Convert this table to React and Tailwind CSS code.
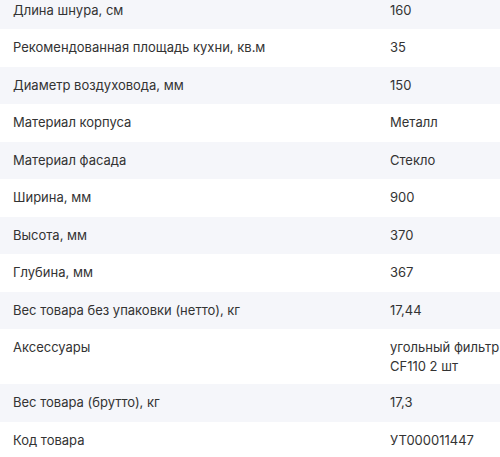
const rows = [
  ['Длина шнура, см', '160'],
  ['Рекомендованная площадь кухни, кв.м', '35'],
  ['Диаметр воздуховода, мм', '150'],
  ['Материал корпуса', 'Металл'],
  ['Материал фасада', 'Стекло'],
  ['Ширина, мм', '900'],
  ['Высота, мм', '370'],
  ['Глубина, мм', '367'],
  ['Вес товара без упаковки (нетто), кг', '17,44'],
  ['Аксессуары', ['угольный фильтр', 'CF110 2 шт']],
  ['Вес товара (брутто), кг', '17,3'],
  ['Код товара', 'УТ000011447'],
];

export default function App() {
  return (
    <div className="w-[500px] h-[457px] overflow-hidden bg-white">
      <div className="mt-[-8.5px] text-[13px] text-[#333333] font-['Inter',sans-serif]">
        {rows.map(([label, value], i) => (
          <div
            key={label}
            className={`grid grid-cols-[390px_1fr] py-[9px] ${i % 2 === 0 ? 'bg-[#f5f6fa]' : 'bg-white'}`}
          >
            <div className="pl-[13px] leading-[19.5px]">{label}</div>
            {Array.isArray(value) ? (
              <div className="leading-[18.5px] whitespace-nowrap">
                {value[0]}
                <br />
                {value[1]}
              </div>
            ) : (
              <div className="leading-[19.5px] whitespace-nowrap">{value}</div>
            )}
          </div>
        ))}
      </div>
    </div>
  );
}
